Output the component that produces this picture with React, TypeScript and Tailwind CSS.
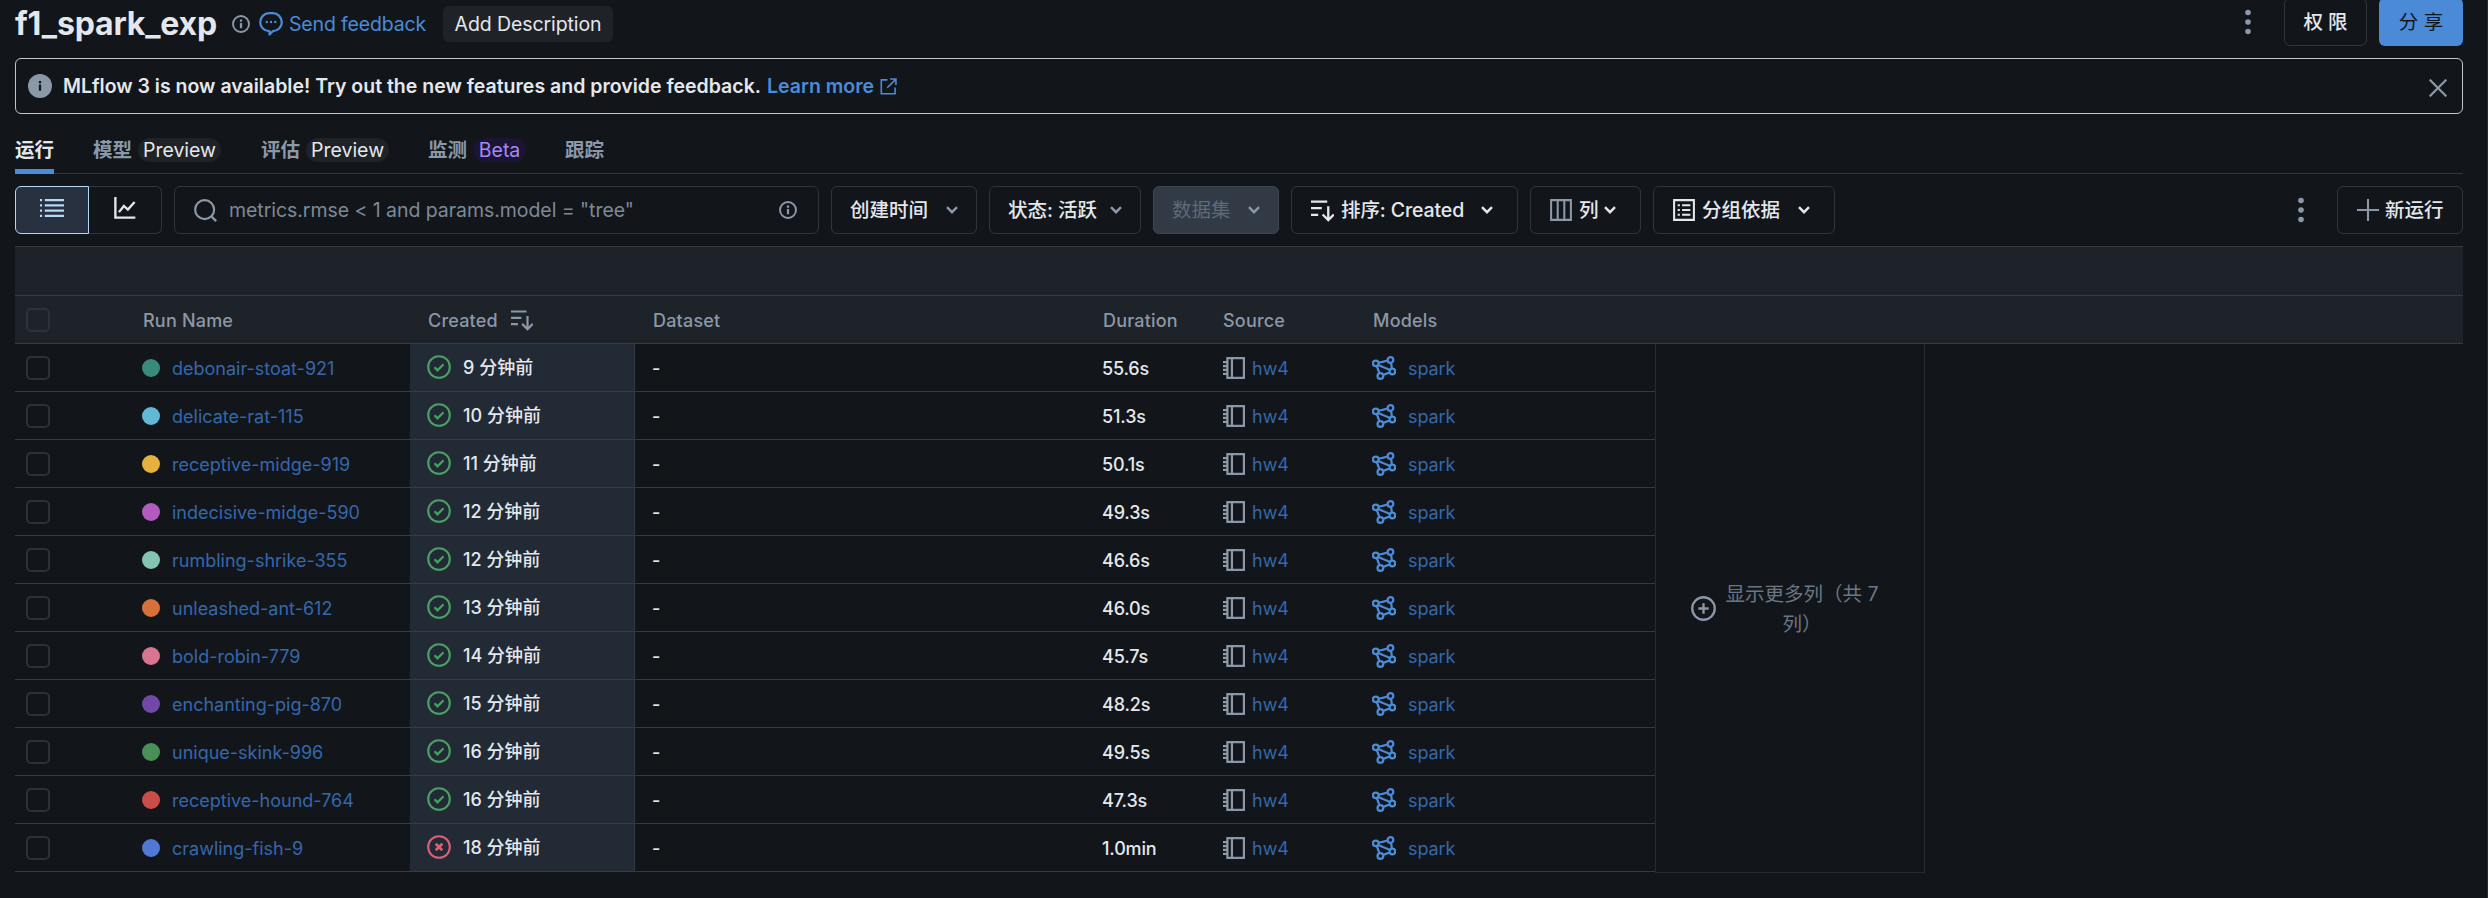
import React from "react";

type IconProps = { className?: string };

const svg = (className: string | undefined, children: React.ReactNode) => (
  <svg viewBox="0 0 16 16" fill="none" stroke="currentColor" strokeWidth="1.5" className={`block shrink-0 ${className ?? ""}`}>
    {children}
  </svg>
);

const Info = ({ className }: IconProps) =>
  svg(className, (
    <>
      <circle cx="8" cy="8" r="7.1" strokeWidth="1.7" />
      <path d="M8 7v4.8M8 4v1.9" strokeWidth="2" />
    </>
  ));
const InfoFill = ({ className }: IconProps) =>
  svg(className, (
    <>
      <circle cx="8" cy="8" r="8" fill="currentColor" stroke="none" />
      <path d="M8 7v4.2M8 4.7v1.5" stroke="#12161b" strokeWidth="1.5" />
    </>
  ));
const Bubble = ({ className }: IconProps) =>
  svg(className, (
    <>
      <path d="M6.8.8h2.4a6 6 0 0 1 0 12L7 15v-2.2h-.2a6 6 0 0 1 0-12Z" strokeLinejoin="round" />
      <g fill="currentColor" stroke="none">
        <circle cx="5.2" cy="6.7" r=".8" />
        <circle cx="8" cy="6.7" r=".8" />
        <circle cx="10.8" cy="6.7" r=".8" />
      </g>
    </>
  ));
const External = ({ className }: IconProps) =>
  svg(className, <path d="M7 1.8H1.2v13h13V9M9.5 1h5.5v5.5M15 1 6.8 9.2" />);
const Close = ({ className }: IconProps) => svg(className, <path d="m.6.6 14.8 14.8M15.4.6.6 15.4" strokeWidth="2" />);
const Kebab = ({ className }: IconProps) => (
  <svg viewBox="0 0 6 26" fill="currentColor" className={`block shrink-0 ${className ?? ""}`}>
    <circle cx="3" cy="3.5" r="2.8" />
    <circle cx="3" cy="13" r="2.8" />
    <circle cx="3" cy="22.5" r="2.8" />
  </svg>
);
const List = ({ className }: IconProps) =>
  svg(className, <path d="M3.2 2.7H16M3.2 6.2H16M3.2 9.7H16M3.2 13.2H16M0 2.7h1.4M0 6.2h1.4M0 9.7h1.4M0 13.2h1.4" />);
const Chart = ({ className }: IconProps) =>
  svg(className, <path d="M1 0v15h14.5M3.6 11l3.6-4.5 2.9 2.6L15 3.6" strokeWidth="1.7" />);
const Search = ({ className }: IconProps) =>
  svg(className, (
    <>
      <circle cx="7.4" cy="7.4" r="6.6" />
      <path d="m12 12 3.4 3.4" strokeWidth="1.7" />
    </>
  ));
const Chevron = ({ className }: IconProps) => (
  <svg viewBox="0 0 12 8" fill="none" stroke="currentColor" strokeWidth="2.4" className={`block shrink-0 ${className ?? ""}`}>
    <path d="m1 1.2 5 5 5-5" />
  </svg>
);
const Sort = ({ className }: IconProps) =>
  svg(className, <path d="M0 1.8h11.3M0 6.4h7.5M0 11h5M12 5v9.4M8.1 10.8l3.9 3.9 3.9-3.9" strokeWidth="1.6" />);
const Columns = ({ className }: IconProps) => svg(className, <path d="M.8.8h14.4v14.4H.8zM5.6.8v14.4M10.4.8v14.4" />);
const ListBox = ({ className }: IconProps) =>
  svg(className, <path d="M.8.8h14.4v14.4H.8zM3.4 4.6H5M3.4 8H5M3.4 11.4H5M6.6 4.6h6M6.6 8h6M6.6 11.4h6" />);
const Plus = ({ className }: IconProps) => svg(className, <path d="M8 0v16M0 8h16" />);
const Notebook = ({ className }: IconProps) =>
  svg(className, <path d="M3.2.8h12v14.4h-12zM6.5.8v14.4M0 3.7h3M0 6.6h3M0 9.4h3M0 12.3h3" strokeWidth="1.6" />);
const Model = ({ className }: IconProps) =>
  svg(className, (
    <>
      <circle cx="2.5" cy="4.9" r="1.9" />
      <circle cx="12.3" cy="2.7" r="1.9" />
      <circle cx="13.6" cy="10.3" r="1.9" />
      <circle cx="5.6" cy="13.3" r="1.9" />
      <path d="m4.4 4.5 6-1.4M12.7 4.6l.6 3.8M11.8 11l-4.4 1.6M5 11.5 3.2 6.7M4.1 6l7.9 3.3" strokeWidth="1.5" />
    </>
  ));
const Ok = ({ className }: IconProps) =>
  svg(className, (
    <>
      <circle cx="8" cy="8" r="7.2" strokeWidth="1.4" />
      <path d="m5 8.2 2 2 4-4" strokeWidth="1.5" />
    </>
  ));
const Fail = ({ className }: IconProps) =>
  svg(className, (
    <>
      <circle cx="8" cy="8" r="7.2" strokeWidth="1.4" />
      <path d="m5.8 5.8 4.4 4.4M10.2 5.8l-4.4 4.4" strokeWidth="1.8" />
    </>
  ));
const PlusCircle = ({ className }: IconProps) =>
  svg(className, (
    <>
      <circle cx="8" cy="8" r="7.2" />
      <path d="M8 4.7v6.6M4.7 8h6.6" />
    </>
  ));

const runs = [
  ["debonair-stoat-921", "9 分钟前", "55.6s", "bg-[#3a8a7c]"],
  ["delicate-rat-115", "10 分钟前", "51.3s", "bg-[#62b9d6]"],
  ["receptive-midge-919", "11 分钟前", "50.1s", "bg-[#e5b23e]"],
  ["indecisive-midge-590", "12 分钟前", "49.3s", "bg-[#b05bbd]"],
  ["rumbling-shrike-355", "12 分钟前", "46.6s", "bg-[#85c3b3]"],
  ["unleashed-ant-612", "13 分钟前", "46.0s", "bg-[#d6713a]"],
  ["bold-robin-779", "14 分钟前", "45.7s", "bg-[#d97492]"],
  ["enchanting-pig-870", "15 分钟前", "48.2s", "bg-[#7049a8]"],
  ["unique-skink-996", "16 分钟前", "49.5s", "bg-[#4a8f58]"],
  ["receptive-hound-764", "16 分钟前", "47.3s", "bg-[#cb4d48]"],
  ["crawling-fish-9", "18 分钟前", "1.0min", "bg-[#5078d4]"],
];

const Label = ({ children }: { children: React.ReactNode }) => <span className="pt-0.5 whitespace-nowrap">{children}</span>;

const Pill = ({ children, beta }: { children: string; beta?: boolean }) => (
  <span
    className={`flex h-6 items-center justify-center rounded-full pt-0.5 ${beta ? "w-[53px] bg-[#1b1435] text-[#a58af0]" : "w-[83px] bg-[#1f2226] text-[#e4e8ed]"} font-normal`}
  >
    {children}
  </span>
);

const Checkbox = () => <span className="size-6 rounded-[5px] border-2 border-[#2c323a]" />;

const btn = "flex h-12 shrink-0 items-center rounded-md border border-[#30363e] text-[#e4e8ed]";

export default function App() {
  return (
    <div className="flex h-[898px] w-[2488px] overflow-hidden border-r border-[#262b31] bg-[#12161b] font-['Inter','Noto_Sans_CJK_SC',sans-serif] text-[19.5px] leading-none text-[#e4e8ed]">
      <div className="ml-[15px] flex w-[2448px] flex-col">
        <header className="flex h-[58px] shrink-0">
          <h1 className="w-[219px] pt-[4px] text-[32px] leading-[40px] font-bold tracking-[-0.15px] whitespace-nowrap">f1_spark_exp</h1>
          <Info className="mt-[15px] -ml-[2px] size-[18px] text-[#8b98a8]" />
          <span className="ml-[9px] flex h-12 items-center text-[#4b8bd8]">
            <Bubble className="mr-1.5 size-6" />
            <span className="w-[137px] pt-0.5 tracking-[-0.15px] whitespace-nowrap">Send feedback</span>
          </span>
          <button className="mt-1.5 ml-[17px] flex h-9 w-[170px] items-center justify-center rounded-md bg-[#1f2228] pt-0.5 tracking-[-0.1px] whitespace-nowrap">
            Add Description
          </button>
          <div className="ml-auto flex">
            <Kebab className="mt-[9px] mr-[33px] h-[26px] w-1.5 text-[#8b98a8]" />
            <button className="-mt-0.5 flex h-12 w-[83px] items-center justify-center rounded-md border border-[#30363e] pt-0.5 font-medium">权 限</button>
            <button className="-mt-0.5 ml-3 flex h-12 w-[84px] items-center justify-center rounded-md bg-[#4a8ad6] pt-0.5 text-[#12161b]">
              分 享
            </button>
          </div>
        </header>

        <section className="flex h-14 shrink-0 items-center rounded-md border border-[#c0c6d0] pr-[15px] pl-3 font-semibold">
          <InfoFill className="size-6 text-[#8b98a8]" />
          <span className="ml-[11px] w-[704px] pt-0.5 whitespace-nowrap">MLflow 3 is now available! Try out the new features and provide feedback.</span>
          <span className="w-[113px] pt-0.5 whitespace-nowrap text-[#4b8bd8]">Learn more</span>
          <External className="size-[17px] text-[#4b8bd8]" />
          <Close className="mt-1 ml-auto size-[18px] text-[#8b98a8]" />
        </section>

        <nav className="flex h-[60px] shrink-0 items-stretch border-b border-[#30363e] pt-3 font-semibold text-[#8b98a8]">
          <span className="-mb-px flex w-[39px] items-center border-b-[5px] border-[#4b8bd8] pt-[7px] text-[#e4e8ed]">运行</span>
          <span className="ml-[39px] flex items-center gap-[6px]"><Label>模型</Label><Pill>Preview</Pill></span>
          <span className="ml-[40px] flex items-center gap-[6px]"><Label>评估</Label><Pill>Preview</Pill></span>
          <span className="ml-[39px] flex items-center gap-[6px]"><Label>监测</Label><Pill beta>Beta</Pill></span>
          <span className="ml-[39px] flex items-center"><Label>跟踪</Label></span>
        </nav>

        <div className="mt-3 flex h-12 shrink-0">
          <span className="flex w-[74px] items-center justify-center rounded-l-md border border-[#b5d8f5] bg-[#283140] text-[#b5d8f5]">
            <List className="-mt-1 size-6" />
          </span>
          <span className="flex w-[73px] items-center justify-center rounded-r-md border border-l-0 border-[#30363e]">
            <Chart className="-mt-1 size-[22px]" />
          </span>
          <div className="ml-3 flex w-[645px] items-center rounded-md border border-[#30363e] pr-[21px] pl-[19px] text-[#7e8997]">
            <Search className="size-[23px] text-[#8b98a8]" />
            <span className="ml-3 pt-0.5 tracking-[-0.05px] whitespace-nowrap">metrics.rmse &lt; 1 and params.model = "tree"</span>
            <Info className="ml-auto size-[18px] text-[#8b98a8]" />
          </div>
          <button className={`${btn} ml-3 w-[146px] justify-between pr-[18px] pl-[18px] font-medium`}>
            <Label>创建时间</Label><Chevron className="h-2 w-3 text-[#8b98a8]" />
          </button>
          <button className={`${btn} ml-3 w-[152px] justify-between pr-[18px] pl-[18px] font-medium`}>
            <Label>状态: 活跃</Label><Chevron className="h-2 w-3 text-[#8b98a8]" />
          </button>
          <button className="ml-3 flex w-[126px] items-center justify-between rounded-md border border-[#3d4652] bg-[#323a46] pr-[18px] pl-[18px] text-[#5d6a79]">
            <Label>数据集</Label><Chevron className="h-2 w-3 text-[#8b98a8]" />
          </button>
          <button className={`${btn} ml-3 w-[227px] pr-6 pl-[19px] font-medium tracking-[-0.1px]`}>
            <Sort className="mr-[7px] size-[23px]" />
            <Label>排序: Created</Label>
            <Chevron className="ml-auto h-2 w-3" />
          </button>
          <button className={`${btn} ml-3 w-[111px] pr-6 pl-[19px] font-medium`}>
            <Columns className="mr-[7px] size-[22px] text-[#8b98a8]" />
            <Label>列</Label>
            <Chevron className="ml-auto h-2 w-3" />
          </button>
          <button className={`${btn} ml-3 w-[182px] pr-6 pl-[19px] font-medium`}>
            <ListBox className="mr-[7px] size-[22px]" />
            <Label>分组依据</Label>
            <Chevron className="ml-auto h-2 w-3" />
          </button>
          <Kebab className="mt-[11px] mr-[33px] ml-auto h-[26px] w-1.5 text-[#8b98a8]" />
          <button className={`${btn} w-[126px] pl-[19px] font-medium`}>
            <Plus className="mr-[6px] size-[22px] text-[#8b98a8]" />
            <Label>新运行</Label>
          </button>
        </div>

        <main className="mt-3 flex flex-col text-[18px]">
          <div className="h-[49px] border-t border-[#353b44] bg-[#1e2229]" />
          <div className="flex h-[49px] items-center border-y border-[#353b44] bg-[#1e2229] pl-[11px] font-medium tracking-[0.2px] text-[#8b98a8]">
            <Checkbox />
            <span className="ml-[93px] w-[285px] pt-0.5">Run Name</span>
            <span className="flex w-[225px] items-center">
              <span className="w-[83px] pt-0.5">Created</span>
              <Sort className="size-[22px]" />
            </span>
            <span className="w-[450px] pt-0.5">Dataset</span>
            <span className="w-[120px] pt-0.5">Duration</span>
            <span className="w-[150px] pt-0.5">Source</span>
            <span className="pt-0.5">Models</span>
          </div>
          <div className="flex">
            <div className="w-[1640px]">
              {runs.map(([name, time, duration, dot], i) => (
                <div key={name} className="flex h-12 items-center border-b border-[#353b44] pl-[11px]">
                  <Checkbox />
                  <span className={`ml-[92px] size-[18px] rounded-full ${dot}`} />
                  <span className="ml-3 w-[238px] pt-0.5 whitespace-nowrap text-[#3567ac]">{name}</span>
                  <span className="flex h-12 w-[225px] items-center border-r border-b border-[#353b44] bg-[#222a35] pl-[17px]">
                    {i === 10 ? <Fail className="size-6 text-[#dc5f76]" /> : <Ok className="size-6 text-[#4c9f60]" />}
                    <span className="ml-3 pt-0.5 font-medium">{time}</span>
                  </span>
                  <span className="ml-[17px] w-[450px] pt-0.5 font-medium">-</span>
                  <span className="w-[121px] pt-0.5 font-medium tracking-[-0.15px]">{duration}</span>
                  <Notebook className="h-[22px] w-[22px] text-[#8b98a8]" />
                  <span className="ml-[7px] w-[120px] pt-0.5 text-[#3567ac]">hw4</span>
                  <Model className="size-6 text-[#4b8bd8]" />
                  <span className="ml-3 pt-0.5 tracking-[-0.1px] text-[#3567ac]">spark</span>
                </div>
              ))}
            </div>
            <div className="flex h-[529px] w-[270px] items-center border border-t-0 border-[#262b31] pl-[35px] text-[19.5px] text-[#6b7684]">
              <PlusCircle className="size-[25px] text-[#8b98a8]" />
              <span className="ml-2 w-[156px] pt-0.5 text-center leading-[30px]">显示更多列（共 7 列）</span>
            </div>
          </div>
        </main>
      </div>
    </div>
  );
}
